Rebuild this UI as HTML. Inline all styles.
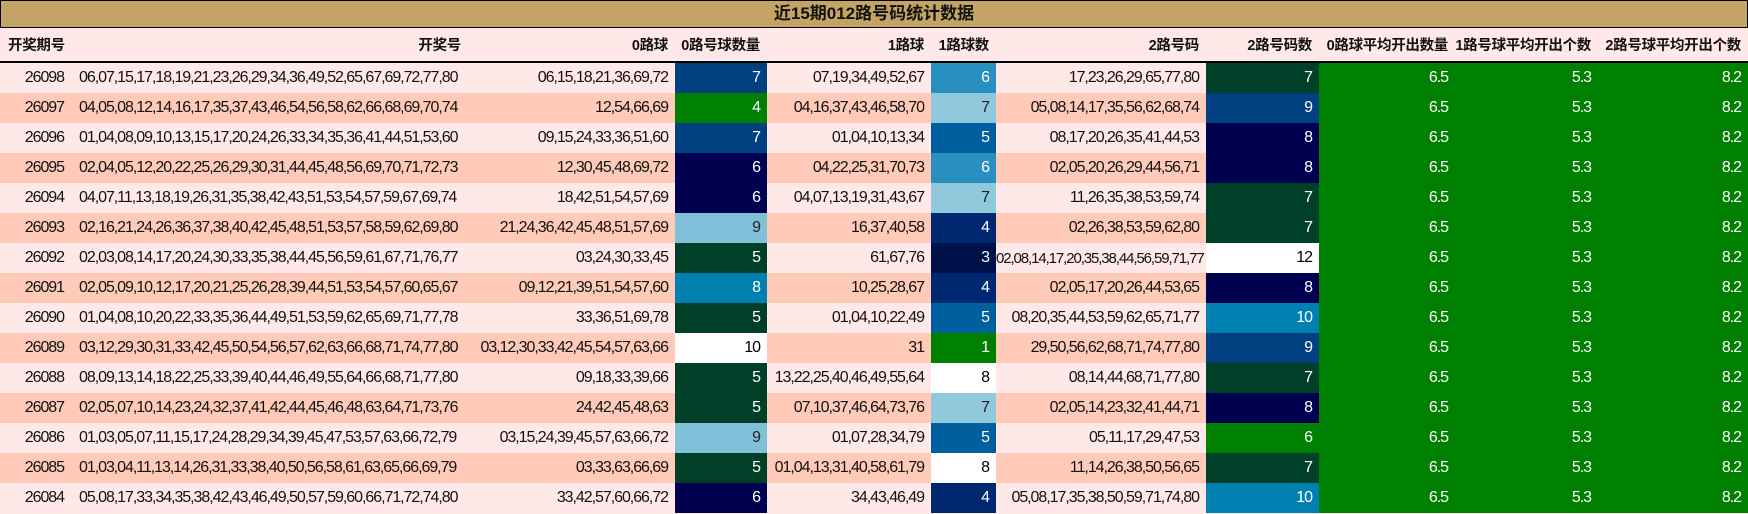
<!DOCTYPE html>
<html><head><meta charset="utf-8"><style>
html,body{margin:0;padding:0;width:1748px;height:514px;overflow:hidden;background:#ffe8e8;}
body{font-family:"Liberation Sans","Noto Sans CJK SC",sans-serif;font-size:16px;color:#111;}
.title{height:26px;background:#c4a464;border:1px solid #000;text-align:center;font-weight:bold;font-size:17px;line-height:26px;}
table{border-collapse:collapse;table-layout:fixed;width:1748px;}
td{padding:0 7px 0 0;text-align:right;height:30px;white-space:nowrap;overflow:hidden;letter-spacing:-1.05px;}
th{height:33px;text-align:right;padding:0 7px 0 0;font-weight:bold;font-size:14.5px;letter-spacing:-0.3px;border-bottom:2px solid #000;white-space:nowrap;}
th.l,td.l{text-align:left;padding-left:8px;}
tr.a{background:#ffe8e8}tr.b{background:#ffcbb8}
.g{background:#008000;color:#fff}
.c{color:#fff}
.w{background:#fff;color:#000}
.nv{background:#000050}.bl{background:#004080}.lb{background:#90c8dc;color:#222}.lb2{background:#80c0d8;color:#222}
.dg{background:#004028}.md{background:#2890c0}.mb{background:#005f9f}.tb{background:#0080b0}.n4{background:#002870}.n3{background:#001048}.gr{background:#008000}
</style></head><body>
<div class="title">近15期012路号码统计数据</div>
<table>
<colgroup><col style="width:71px"><col style="width:397px"><col style="width:207px"><col style="width:92px"><col style="width:164px"><col style="width:65px"><col style="width:210px"><col style="width:113px"><col style="width:136px"><col style="width:143px"><col style="width:150px"></colgroup>
<tr><th class="l">开奖期号</th><th>开奖号</th><th>0路球</th><th>0路号球数量</th><th>1路球</th><th>1路球数</th><th>2路号码</th><th>2路号码数</th><th>0路球平均开出数量</th><th>1路号球平均开出个数</th><th>2路号球平均开出个数</th></tr>
<tr class="a"><td>26098</td><td class="l">06,07,15,17,18,19,21,23,26,29,34,36,49,52,65,67,69,72,77,80</td><td>06,15,18,21,36,69,72</td><td class="c bl">7</td><td>07,19,34,49,52,67</td><td class="c md">6</td><td>17,23,26,29,65,77,80</td><td class="c dg">7</td><td class="g">6.5</td><td class="g">5.3</td><td class="g">8.2</td></tr>
<tr class="b"><td>26097</td><td class="l">04,05,08,12,14,16,17,35,37,43,46,54,56,58,62,66,68,69,70,74</td><td>12,54,66,69</td><td class="c gr">4</td><td>04,16,37,43,46,58,70</td><td class="lb">7</td><td>05,08,14,17,35,56,62,68,74</td><td class="c bl">9</td><td class="g">6.5</td><td class="g">5.3</td><td class="g">8.2</td></tr>
<tr class="a"><td>26096</td><td class="l">01,04,08,09,10,13,15,17,20,24,26,33,34,35,36,41,44,51,53,60</td><td>09,15,24,33,36,51,60</td><td class="c bl">7</td><td>01,04,10,13,34</td><td class="c mb">5</td><td>08,17,20,26,35,41,44,53</td><td class="c nv">8</td><td class="g">6.5</td><td class="g">5.3</td><td class="g">8.2</td></tr>
<tr class="b"><td>26095</td><td class="l">02,04,05,12,20,22,25,26,29,30,31,44,45,48,56,69,70,71,72,73</td><td>12,30,45,48,69,72</td><td class="c nv">6</td><td>04,22,25,31,70,73</td><td class="c md">6</td><td>02,05,20,26,29,44,56,71</td><td class="c nv">8</td><td class="g">6.5</td><td class="g">5.3</td><td class="g">8.2</td></tr>
<tr class="a"><td>26094</td><td class="l">04,07,11,13,18,19,26,31,35,38,42,43,51,53,54,57,59,67,69,74</td><td>18,42,51,54,57,69</td><td class="c nv">6</td><td>04,07,13,19,31,43,67</td><td class="lb">7</td><td>11,26,35,38,53,59,74</td><td class="c dg">7</td><td class="g">6.5</td><td class="g">5.3</td><td class="g">8.2</td></tr>
<tr class="b"><td>26093</td><td class="l">02,16,21,24,26,36,37,38,40,42,45,48,51,53,57,58,59,62,69,80</td><td>21,24,36,42,45,48,51,57,69</td><td class="lb2">9</td><td>16,37,40,58</td><td class="c n4">4</td><td>02,26,38,53,59,62,80</td><td class="c dg">7</td><td class="g">6.5</td><td class="g">5.3</td><td class="g">8.2</td></tr>
<tr class="a"><td>26092</td><td class="l">02,03,08,14,17,20,24,30,33,35,38,44,45,56,59,61,67,71,76,77</td><td>03,24,30,33,45</td><td class="c dg">5</td><td>61,67,76</td><td class="c n3">3</td><td style="font-size:15px;letter-spacing:-1.1px;padding-right:4px">02,08,14,17,20,35,38,44,56,59,71,77</td><td class="w">12</td><td class="g">6.5</td><td class="g">5.3</td><td class="g">8.2</td></tr>
<tr class="b"><td>26091</td><td class="l">02,05,09,10,12,17,20,21,25,26,28,39,44,51,53,54,57,60,65,67</td><td>09,12,21,39,51,54,57,60</td><td class="c tb">8</td><td>10,25,28,67</td><td class="c n4">4</td><td>02,05,17,20,26,44,53,65</td><td class="c nv">8</td><td class="g">6.5</td><td class="g">5.3</td><td class="g">8.2</td></tr>
<tr class="a"><td>26090</td><td class="l">01,04,08,10,20,22,33,35,36,44,49,51,53,59,62,65,69,71,77,78</td><td>33,36,51,69,78</td><td class="c dg">5</td><td>01,04,10,22,49</td><td class="c mb">5</td><td>08,20,35,44,53,59,62,65,71,77</td><td class="c tb">10</td><td class="g">6.5</td><td class="g">5.3</td><td class="g">8.2</td></tr>
<tr class="b"><td>26089</td><td class="l">03,12,29,30,31,33,42,45,50,54,56,57,62,63,66,68,71,74,77,80</td><td>03,12,30,33,42,45,54,57,63,66</td><td class="w">10</td><td>31</td><td class="c gr">1</td><td>29,50,56,62,68,71,74,77,80</td><td class="c bl">9</td><td class="g">6.5</td><td class="g">5.3</td><td class="g">8.2</td></tr>
<tr class="a"><td>26088</td><td class="l">08,09,13,14,18,22,25,33,39,40,44,46,49,55,64,66,68,71,77,80</td><td>09,18,33,39,66</td><td class="c dg">5</td><td>13,22,25,40,46,49,55,64</td><td class="w">8</td><td>08,14,44,68,71,77,80</td><td class="c dg">7</td><td class="g">6.5</td><td class="g">5.3</td><td class="g">8.2</td></tr>
<tr class="b"><td>26087</td><td class="l">02,05,07,10,14,23,24,32,37,41,42,44,45,46,48,63,64,71,73,76</td><td>24,42,45,48,63</td><td class="c dg">5</td><td>07,10,37,46,64,73,76</td><td class="lb">7</td><td>02,05,14,23,32,41,44,71</td><td class="c nv">8</td><td class="g">6.5</td><td class="g">5.3</td><td class="g">8.2</td></tr>
<tr class="a"><td>26086</td><td class="l">01,03,05,07,11,15,17,24,28,29,34,39,45,47,53,57,63,66,72,79</td><td>03,15,24,39,45,57,63,66,72</td><td class="lb2">9</td><td>01,07,28,34,79</td><td class="c mb">5</td><td>05,11,17,29,47,53</td><td class="c gr">6</td><td class="g">6.5</td><td class="g">5.3</td><td class="g">8.2</td></tr>
<tr class="b"><td>26085</td><td class="l">01,03,04,11,13,14,26,31,33,38,40,50,56,58,61,63,65,66,69,79</td><td>03,33,63,66,69</td><td class="c dg">5</td><td>01,04,13,31,40,58,61,79</td><td class="w">8</td><td>11,14,26,38,50,56,65</td><td class="c dg">7</td><td class="g">6.5</td><td class="g">5.3</td><td class="g">8.2</td></tr>
<tr class="a"><td>26084</td><td class="l">05,08,17,33,34,35,38,42,43,46,49,50,57,59,60,66,71,72,74,80</td><td>33,42,57,60,66,72</td><td class="c nv">6</td><td>34,43,46,49</td><td class="c n4">4</td><td>05,08,17,35,38,50,59,71,74,80</td><td class="c tb">10</td><td class="g">6.5</td><td class="g">5.3</td><td class="g">8.2</td></tr>
</table>
</body></html>
